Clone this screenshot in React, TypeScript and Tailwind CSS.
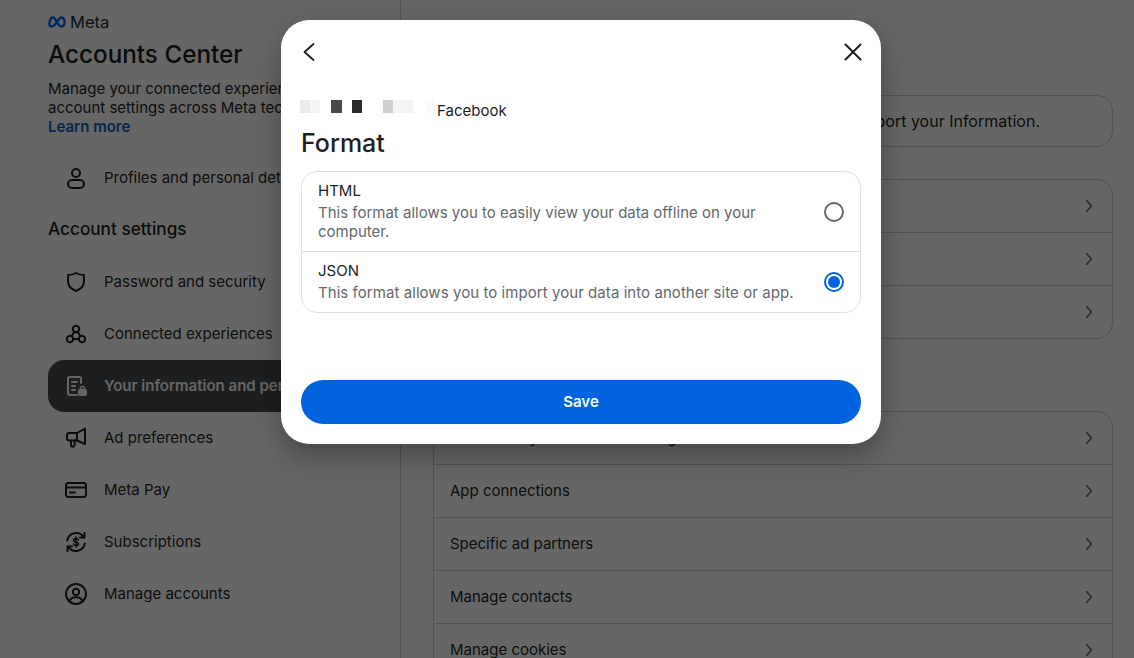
import { ReactNode } from "react";

function Ico({ children }: { children: ReactNode }) {
  return (
    <svg viewBox="0 0 24 24" className="w-6 h-6 shrink-0" fill="none" stroke="currentColor" strokeWidth="2" strokeLinecap="round" strokeLinejoin="round">
      {children}
    </svg>
  );
}

function Chevron() {
  return (
    <svg viewBox="0 0 12 16" className="w-3 h-4 shrink-0 text-[#65686c]" fill="none" stroke="currentColor" strokeWidth="1.5" strokeLinecap="round" strokeLinejoin="round">
      <path d="M3.500 2.500 8.500 8l-5 5.500" />
    </svg>
  );
}

function MetaLogo() {
  return (
    <svg viewBox="0 0 18 12" className="w-[18px] h-[12px] shrink-0" fill="none" stroke="currentColor" strokeWidth="2.4" strokeLinecap="round" strokeLinejoin="round">
      <path d="M1.400 7.800C1.400 4.400 3 1.500 5 1.500c2.800 0 5 9 8.200 9 2.200 0 3.400-2 3.400-4.500 0-2.500-1.200-4.500-3.200-4.500C10.200 1.500 7.800 10.500 4 10.500c-1.600 0-2.600-1-2.600-2.700Z" />
    </svg>
  );
}

const navItems = [
  {
    label: "Password and security",
    icon: <path d="M12 3c2.600 1.600 5.200 2 8 2v6c0 5-3.200 8.200-8 10-4.800-1.800-8-5-8-10V5c2.800 0 5.400-.4 8-2Z" />,
  },
  {
    label: "Connected experiences",
    icon: (
      <>
        <circle cx="12" cy="7" r="3.200" />
        <circle cx="6" cy="17" r="3.200" />
        <circle cx="18" cy="17" r="3.200" />
        <path d="M9.200 17h5.600M10.400 9.800l-2.800 4.400M13.600 9.800l2.800 4.400" />
      </>
    ),
  },
  {
    label: "Your information and permissions",
    active: true,
    icon: (
      <>
        <path d="M13 21H6a2 2 0 0 1-2-2V5a2 2 0 0 1 2-2h9a2 2 0 0 1 2 2v4" />
        <path d="M8 8h5M8 12h3M8 16h3" />
        <rect x="15" y="16" width="7" height="5" rx="1" fill="currentColor" />
        <path d="M16.500 16v-1.500a2 2 0 0 1 4 0V16" strokeWidth="1.500" />
      </>
    ),
  },
  {
    label: "Ad preferences",
    icon: (
      <>
        <path d="M21 2.500V18l-8-3.500H5a2 2 0 0 1-2-2V9a2 2 0 0 1 2-2h8l8-4.500Z" />
        <path d="M13 7v7.500M7 14.500V19a1.800 1.800 0 0 0 3.600 0v-4.500" />
      </>
    ),
  },
  {
    label: "Meta Pay",
    icon: (
      <>
        <rect x="2" y="5" width="20" height="14" rx="2.500" />
        <path d="M2 9.500h20M6 14.500h5" />
      </>
    ),
  },
  {
    label: "Subscriptions",
    icon: (
      <>
        <path d="M3.200 10.500A9 9 0 0 1 19.800 7.500M20.800 13.500A9 9 0 0 1 4.200 16.500" />
        <path d="M20.500 3v4.500H16M3.500 21v-4.500H8" />
        <path d="M14.500 9.800c-.4-.8-1.300-1.300-2.500-1.300-1.400 0-2.500.8-2.500 1.800 0 2.500 5 1.100 5 3.400 0 1-1.100 1.800-2.500 1.800-1.200 0-2.100-.5-2.500-1.300M12 7v10" strokeWidth="1.500" />
      </>
    ),
  },
  {
    label: "Manage accounts",
    icon: (
      <>
        <circle cx="12" cy="12" r="10" />
        <circle cx="12" cy="10" r="3.200" />
        <path d="M5.500 19c1-2.600 3.400-3.800 6.500-3.800s5.500 1.200 6.500 3.800" />
      </>
    ),
  },
];

// the labels of these rows sit behind the modal in the screenshot
const topRows = ["", "", ""];
const bottomRows = ["Your activity off Meta technologies", "App connections", "Specific ad partners", "Manage contacts", "Manage cookies"];

function Sidebar() {
  return (
    <aside className="w-[401px] shrink-0 border-r border-[#cbd0d5] pl-12 pt-[13px]">
      <div className="flex items-center gap-1 h-[18px] text-[#0064e0]">
        <MetaLogo />
        <span className="text-[16.500px] text-[#1c2b33]">Meta</span>
      </div>
      <h1 className="mt-[8px] text-[24.250px] leading-[32px] font-medium text-[#1c1e21]">Accounts Center</h1>
      <p className="mt-[8px] text-[15px] leading-[19px] text-[#1c1e21] whitespace-nowrap">
        Manage your connected experiences and
        <br />
        account settings across Meta technologies.
      </p>
      <a className="block text-[15px] leading-[19px] font-semibold text-[#0a5dc2]">Learn more</a>
      <div className="mt-[16px] h-[52px] flex items-center gap-4 pl-4 text-[#1c1e21]">
        <Ico>
          <circle cx="12" cy="7" r="4" />
          <rect x="4" y="14" width="16" height="8" rx="4" />
        </Ico>
        <span className="text-[15px] font-normal whitespace-nowrap">Profiles and personal details</span>
      </div>
      <h2 className="mt-[13px] h-[24px] leading-[24px] text-[17.200px] font-medium text-[#1c1e21]">Account settings</h2>
      <nav className="mt-[15px] pr-[20px]">
        {navItems.map((item) => (
          <div
            key={item.label}
            className={
              item.active
                ? "h-[52px] flex items-center gap-4 pl-4 rounded-2xl bg-[#4a4c50] text-white"
                : "h-[52px] flex items-center gap-4 pl-4 rounded-2xl text-[#1c1e21]"
            }
          >
            <Ico>{item.icon}</Ico>
            <span className={item.active ? "text-[15px] font-semibold whitespace-nowrap" : "text-[15px] whitespace-nowrap"}>
              {item.label}
            </span>
          </div>
        ))}
      </nav>
    </aside>
  );
}

function RowCard({ rows }: { rows: string[] }) {
  return (
    <div className="rounded-2xl border border-[#cbd0d5] overflow-hidden">
      {rows.map((r, i) => (
        <div key={i} className={i === 0 ? "h-[52px] flex items-center justify-between pl-4 pr-[17px]" : "h-[53px] flex items-center justify-between pl-4 pr-[17px] border-t border-[#cbd0d5]"}>
          <span className="text-[15px] text-[#1c1e21]">{r}</span>
          <Chevron />
        </div>
      ))}
    </div>
  );
}

function Radio({ checked }: { checked?: boolean }) {
  if (checked) {
    return (
      <span className="w-5 h-5 shrink-0 rounded-full border-2 border-[#0064e0] flex items-center justify-center">
        <span className="w-3 h-3 rounded-full bg-[#0064e0]" />
      </span>
    );
  }
  return <span className="w-5 h-5 shrink-0 rounded-full border-2 border-[#65686c]" />;
}

function Modal() {
  return (
    <div className="absolute left-[281px] top-5 w-[600px] h-[424px] bg-white rounded-[28px] shadow-[0_12px_28px_rgba(0,0,0,0.3)] px-5 flex flex-col">
      <div className="h-[64px] flex items-center justify-between shrink-0 text-[#1c1e21]">
        <svg viewBox="0 0 16 20" className="w-4 h-5" fill="none" stroke="currentColor" strokeWidth="1.800" strokeLinecap="round" strokeLinejoin="round">
          <path d="M12.500 2 3.500 10l9 8" />
        </svg>
        <svg viewBox="0 0 20 20" className="w-5 h-5 mr-[-2px]" fill="none" stroke="currentColor" strokeWidth="2" strokeLinecap="round">
          <path d="M2.500 2.500l15 15M17.500 2.500l-15 15" />
        </svg>
      </div>
      <div className="mt-[16px] h-[20px] flex items-start text-[15px] text-[#1c1e21]">
        <div className="flex h-[13px] ml-[-1px] w-[137px] shrink-0">
          <span className="w-[10px] bg-[#ebebeb]" />
          <span className="w-[10px] bg-[#f5f5f5]" />
          <span className="w-[11px]" />
          <span className="w-[11px] bg-[#4a4a4a]" />
          <span className="w-[10px]" />
          <span className="w-[10px] bg-[#2a2a2a]" />
          <span className="w-[21px]" />
          <span className="w-[10px] bg-[#cfcfcf]" />
          <span className="w-[20px] bg-[#f4f4f4]" />
          <span className="w-[12px]" />
          <span className="w-[10px] bg-[#fafafa]" />
        </div>
        <span className="mt-[1px] leading-[20px]">Facebook</span>
      </div>
      <h3 className="mt-[7px] h-[32px] leading-[32px] text-[25px] font-medium text-[#1c1e21]">Format</h3>
      <div className="mt-[12px] rounded-2xl border border-[#dee0e3] h-[142px] shrink-0">
        <div className="h-[79px] flex items-center justify-between pl-4 pr-4">
          <div className="w-[470px] mt-[-2px]">
            <div className="text-[15px] leading-[19px] text-[#1c1e21]">HTML</div>
            <div className="mt-[3px] text-[15px] leading-[19px] text-[#65686c]">
              This format allows you to easily view your data offline on your computer.
            </div>
          </div>
          <Radio />
        </div>
        <div className="h-[61px] flex items-start justify-between pl-4 pr-4 pt-[9px] border-t border-[#dee0e3]">
          <div>
            <div className="text-[15px] leading-[19px] text-[#1c1e21]">JSON</div>
            <div className="mt-[3px] text-[15px] leading-[19px] text-[#65686c] tracking-[0.06px] whitespace-nowrap">
              This format allows you to import your data into another site or app.
            </div>
          </div>
          <span className="mt-[11px]">
            <Radio checked />
          </span>
        </div>
      </div>
      <button className="mt-[67px] h-[44px] rounded-full bg-[#0064e0] text-white text-[15px] font-semibold">Save</button>
    </div>
  );
}

export default function App() {
  return (
    <div className="relative w-[1134px] h-[658px] overflow-hidden bg-white font-['Inter',sans-serif]">
      <div className="flex h-full">
        <Sidebar />
        <main className="flex-1 min-w-0 pl-[32px] pr-[21px] pt-[95px]">
          <div className="h-[52px] rounded-2xl border border-[#cbd0d5] flex items-center justify-end pr-[72px] pb-[1px]">
            <span className="text-[16px] text-[#1c1e21]">You can export your Information.</span>
          </div>
          <div className="mt-[32px]">
            <RowCard rows={topRows} />
          </div>
          <div className="mt-[72px]">
            <RowCard rows={bottomRows} />
          </div>
        </main>
      </div>
      <div className="absolute inset-0 bg-black/60" />
      <Modal />
    </div>
  );
}
